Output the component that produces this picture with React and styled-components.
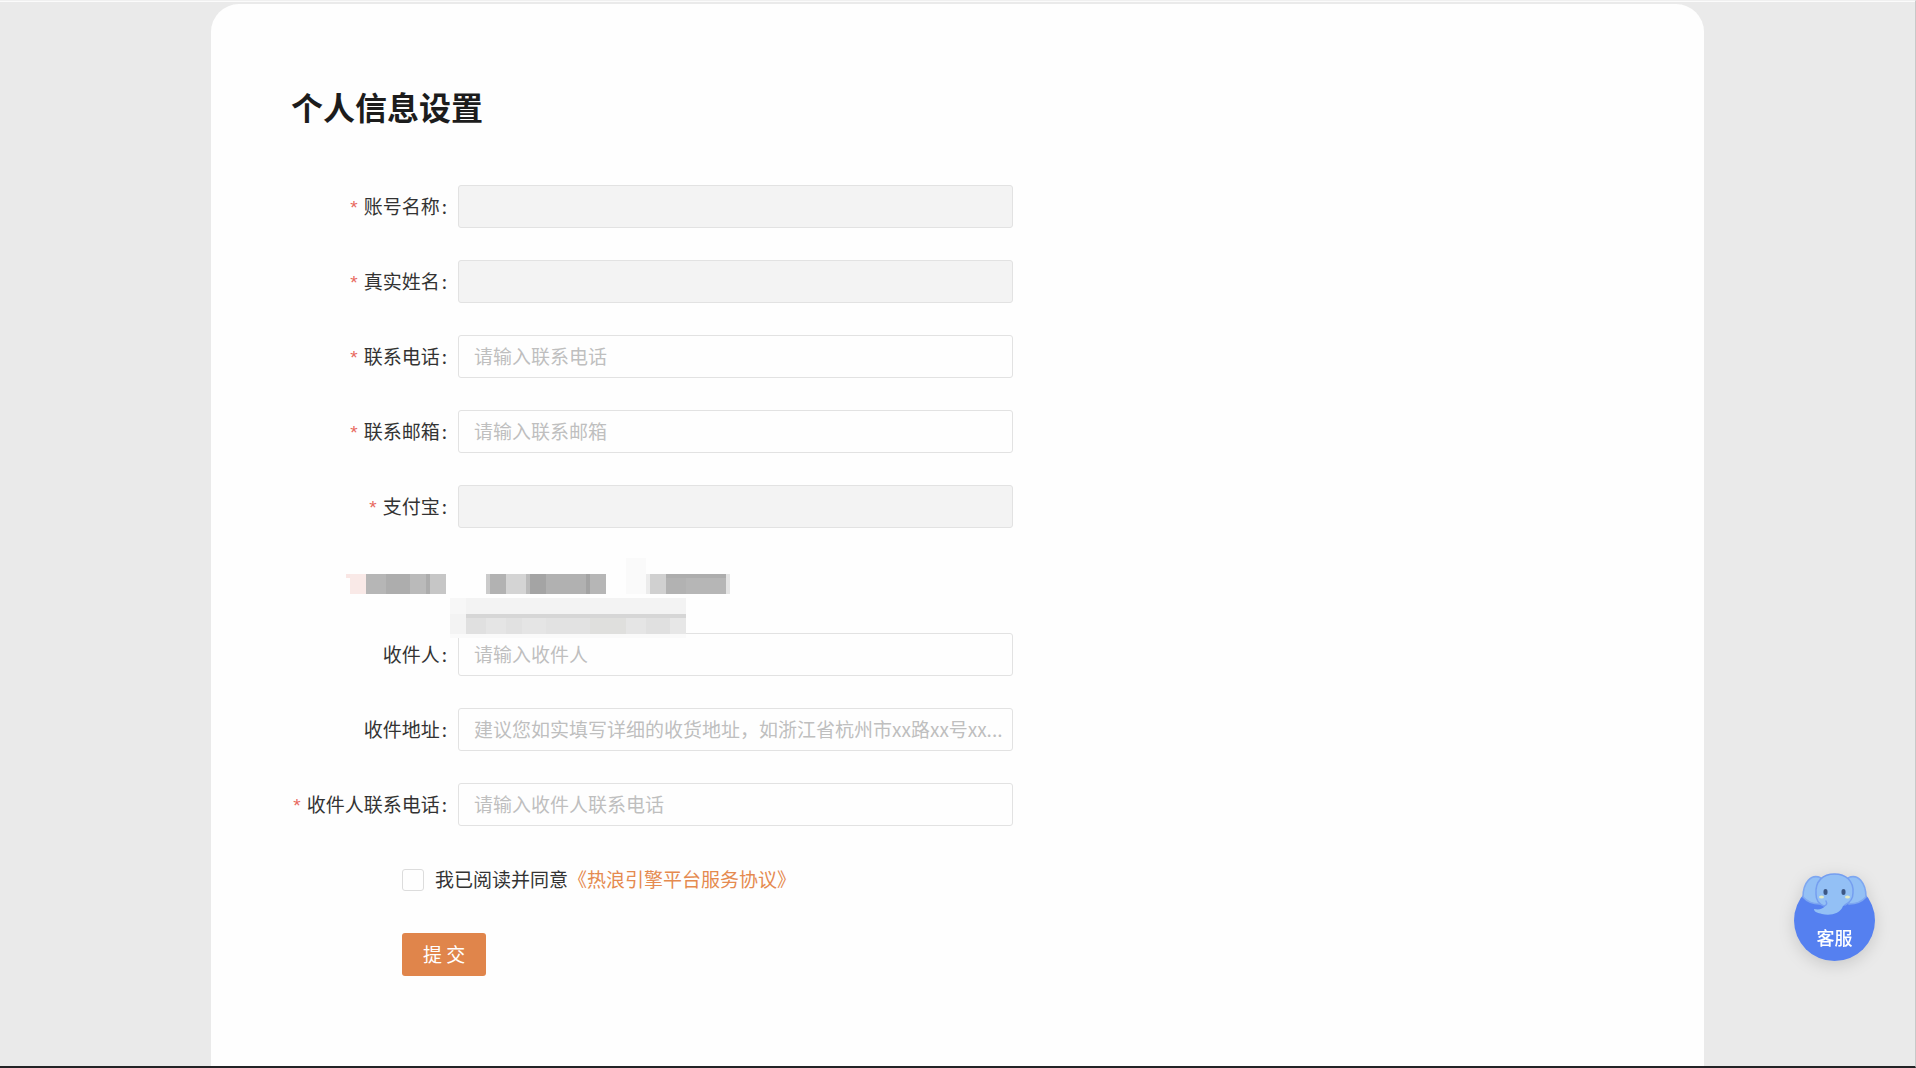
import React from "react";
import styled, { createGlobalStyle } from "styled-components";

const Global = createGlobalStyle`
  *, *::before, *::after { box-sizing: border-box; }
  body {
    margin: 0;
    background: #eaeaea;
    color: #333;
    font: 19px/28px "Noto Sans CJK SC", sans-serif;
  }
  input, button { font: inherit; }
`;

const Page = styled.div`
  display: flex;
  flex-direction: column;
  min-height: 100vh;
  border-top: 1px solid #f0f0f0;
  border-right: 1px solid #c8c8c8;
  border-bottom: 2px solid #232326;
`;

const TopRule = styled.div`
  height: 1px;
  margin-bottom: 2px;
  background: #fbfbfb;
`;

const Panel = styled.main`
  flex: 1;
  margin: 0 211px;
  padding: 80px;
  border-radius: 28px 28px 0 0;
  background: #fefefe;
`;

const Title = styled.h1`
  margin: 0;
  color: #1c1c1c;
  font-size: 32px;
  line-height: 44px;
  font-weight: 700;
`;

const Form = styled.form`
  display: flex;
  flex-direction: column;
  gap: 32px;
  margin-top: 57px;
`;

const Row = styled.div`
  display: grid;
  grid-template-columns: 167px minmax(0, 555px);
  align-items: center;
  min-height: 43px;
`;

const Label = styled.label`
  padding: 0 11px 2px 0;
  text-align: right;
  white-space: nowrap;

  &::before {
    content: ${(p) => (p.$required ? '"*"' : "none")};
    margin-right: 4px;
    color: #e8685f;
    font-family: "Liberation Mono", monospace;
    line-height: 1;
  }
  &::after {
    content: ":";
    margin-left: 2px;
  }
`;

const TextInput = styled.input`
  width: 100%;
  height: 43px;
  padding: 0 4px 2px 15px;
  border: 1px solid #e2e2e2;
  border-radius: 3px;
  outline: none;
  background: #fefefe;
  color: #333;
  text-overflow: ellipsis;

  &::placeholder { color: #bfbfbf; opacity: 1; }
  &:disabled { background: #f3f3f3; }
`;

const MaskedRow = styled.div`
  position: relative;
  height: 41px;
`;

const Mosaic = styled.svg`
  position: absolute;
  z-index: 1;
  left: 55px;
  top: -2px;
`;

const Actions = styled.div`
  display: flex;
  align-items: center;
  min-height: 43px;
  padding-left: 111px;
`;

const Agree = styled.label`
  display: flex;
  align-items: center;
  gap: 11px;
`;

const AgreeText = styled.span`
  padding-bottom: 2px;
`;

const Check = styled.input`
  appearance: none;
  width: 22px;
  height: 22px;
  margin: 0;
  border: 1px solid #dcdcdc;
  border-radius: 3px;
  background: #fefefe;

  &:checked { background: #e0854b; }
`;

const Link = styled.a`
  color: #e58a4f;
  text-decoration: none;
`;

const Submit = styled.button`
  height: 43px;
  padding: 0 21px 2px;
  border: 0;
  border-radius: 3px;
  background: #e0854b;
  color: #fff;
`;

const Support = styled.button`
  position: fixed;
  right: 41px;
  bottom: 107px;
  width: 81px;
  height: 88px;
  padding: 0;
  border: 0;
  background: none;
  color: #fff;
`;

const Elephant = styled.svg`
  position: absolute;
  inset: 0;
  overflow: visible;
  filter: drop-shadow(0 4px 8px rgba(0, 0, 0, 0.14));
`;

const SupportText = styled.span`
  position: absolute;
  left: 0;
  right: 0;
  bottom: 10px;
  font-size: 18px;
  font-weight: 500;
`;

const before = [
  { id: "account", label: "账号名称", required: true, disabled: true },
  { id: "realname", label: "真实姓名", required: true, disabled: true },
  { id: "phone", label: "联系电话", required: true, placeholder: "请输入联系电话" },
  { id: "email", label: "联系邮箱", required: true, placeholder: "请输入联系邮箱" },
  { id: "alipay", label: "支付宝", required: true, disabled: true },
];

const after = [
  { id: "receiver", label: "收件人", placeholder: "请输入收件人" },
  { id: "address", label: "收件地址", placeholder: "建议您如实填写详细的收货地址，如浙江省杭州市xx路xx号xx..." },
  { id: "receiverPhone", label: "收件人联系电话", required: true, placeholder: "请输入收件人联系电话" },
];

// x, y, width, height, colour of each masking tile
const tiles = [
  [104, 40, 236, 40, "#fafafa"],
  [104, 40, 16, 16, "#f7f7f7"],
  [120, 40, 220, 16, "#f3f3f3"],
  [104, 56, 16, 20, "#f3f3f3"],
  [0, 16, 20, 4, "#f9e6e4"],
  [4, 16, 16, 20, "#f9e9e7"],
  [20, 16, 20, 20, "#b6b6b6"],
  [40, 16, 24, 20, "#adadad"],
  [64, 16, 16, 20, "#bababa"],
  [80, 16, 4, 20, "#acacac"],
  [84, 16, 16, 20, "#c6c6c6"],
  [140, 16, 4, 20, "#cbcbcb"],
  [144, 16, 16, 20, "#b2b2b2"],
  [160, 16, 20, 20, "#d4d4d4"],
  [180, 16, 4, 20, "#bbbbbb"],
  [184, 16, 16, 20, "#a4a4a4"],
  [200, 16, 40, 20, "#b1b1b1"],
  [240, 16, 4, 20, "#a3a3a3"],
  [244, 16, 16, 20, "#b6b6b6"],
  [280, 0, 20, 36, "#fafafa"],
  [300, 16, 4, 20, "#ececec"],
  [304, 16, 16, 20, "#d0d0d0"],
  [320, 16, 20, 20, "#b2b2b2"],
  [340, 16, 40, 20, "#b6b6b6"],
  [320, 16, 60, 4, "#adadad"],
  [380, 16, 4, 20, "#e4e4e4"],
  [120, 56, 20, 20, "#e0e0e0"],
  [140, 56, 20, 20, "#e5e5e5"],
  [160, 56, 16, 20, "#e1e1e1"],
  [176, 56, 24, 20, "#e5e5e5"],
  [200, 56, 44, 20, "#e2e2e2"],
  [244, 56, 36, 20, "#dfdfdd"],
  [280, 56, 20, 20, "#e5e5e5"],
  [300, 56, 24, 20, "#e0e0e0"],
  [324, 56, 16, 20, "#e7e7e7"],
  [120, 56, 220, 4, "#d6d6d6"],
];

function Field({ id, label, required, ...rest }) {
  return (
    <Row>
      <Label htmlFor={id} $required={required}>{label}</Label>
      <TextInput id={id} name={id} type="text" {...rest} />
    </Row>
  );
}

export default function App() {
  return (
    <>
      <Global />
      <Page>
        <TopRule />
        <Panel>
          <Title>个人信息设置</Title>
          <Form onSubmit={(e) => e.preventDefault()}>
            {before.map((f) => <Field key={f.id} {...f} />)}
            <MaskedRow>
              <Mosaic width="400" height="80" shapeRendering="crispEdges" aria-hidden="true">
                {tiles.map(([x, y, w, h, fill], i) => (
                  <rect key={i} x={x} y={y} width={w} height={h} fill={fill} />
                ))}
              </Mosaic>
            </MaskedRow>
            {after.map((f) => <Field key={f.id} {...f} />)}
            <Actions>
              <Agree>
                <Check type="checkbox" />
                <AgreeText>我已阅读并同意<Link href="#agreement">《热浪引擎平台服务协议》</Link></AgreeText>
              </Agree>
            </Actions>
            <Actions>
              <Submit type="submit">提 交</Submit>
            </Actions>
          </Form>
        </Panel>
        <Support type="button">
          <Elephant width="81" height="88" viewBox="0 0 81 88" aria-hidden="true">
            <circle cx="40.5" cy="47.5" r="40.5" fill="#5580f0" />
            <g fill="#93c0f5" stroke="#7ea7f1" strokeWidth="1.5">
              <path d="M27 5C17 0 9 10 9 24q6 7 17 7z" />
              <path d="M54 5c10-5 18 5 18 19q-6 7-17 7z" />
            </g>
            <path
              d="M22 22C21 8 29 1 40.500 1S60 8 59 20c0 7-3 10-10 13-3 8-13 10-21 8-4-1-8-2-8-5 5 1 9 0 11-3-6-1-9-4-9-11z"
              fill="#93c0f5"
            />
            <path
              d="M32 28q2 4-2 5-8-3-8-12C21 8 29 1 40.500 1S60 8 59 20q0 8-8 12"
              fill="none"
              stroke="#759ef0"
              strokeWidth="1.5"
              strokeLinecap="round"
            />
            <rect x="29.500" y="16" width="4" height="6" rx="2" fill="#3c5784" />
            <rect x="47.500" y="16" width="4" height="6" rx="2" fill="#3c5784" />
            <ellipse cx="27.500" cy="24" rx="2.500" ry="1.500" fill="#e6ecc4" />
            <ellipse cx="53.500" cy="24" rx="2.500" ry="1.500" fill="#e6ecc4" />
          </Elephant>
          <SupportText>客服</SupportText>
        </Support>
      </Page>
    </>
  );
}
